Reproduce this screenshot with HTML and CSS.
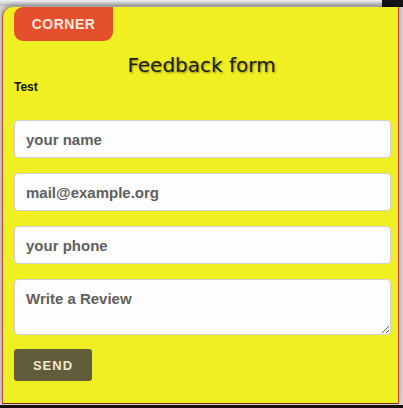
FILE: index.html
```html
<!DOCTYPE html>
<html>
<head>
<meta charset="utf-8">
<link rel="stylesheet" href="styles.css">
</head>
<body>
<div class="panel">
  <div class="tab">CORNER</div>
  <h1 class="title">Feedback form</h1>
  <div class="note">Test</div>
  <form class="form">
    <input class="field" type="text" placeholder="your name">
    <input class="field" type="text" placeholder="mail@example.org">
    <input class="field" type="text" placeholder="your phone">
    <textarea class="field area" placeholder="Write a Review"></textarea>
    <button class="send" type="button">SEND</button>
  </form>
</div>
</body>
</html>
```
FILE: styles.css
```css
html, body {
  margin: 0;
  padding: 0;
}
body {
  width: 403px;
  height: 408px;
  overflow: hidden;
  background: linear-gradient(to bottom, #f2f2f2 0, #bdbdbd 6px, #d8d8d8 6px) ;
  position: relative;
}
body::before {
  content: "";
  position: absolute;
  right: 0;
  top: 0;
  width: 21px;
  height: 7px;
  background: #151515;
}
body::after {
  content: "";
  position: absolute;
  left: 0;
  bottom: 0;
  width: 403px;
  height: 3px;
  background: #1a1010;
}
.panel {
  position: relative;
  z-index: 1;
  margin: 7px 0 0 2px;
  width: 397px;
  height: 397px;
  background: #f0ef22;
  border-left: 1px solid #c2452c;
  border-right: 1px solid #c2452c;
  border-bottom: 1px solid #7a2a18;
  border-top-left-radius: 10px;
  padding: 0 9px 0 11px;
  box-sizing: border-box;
  box-shadow: 0 -2px 5px rgba(0,0,0,0.35);
  font-family: "Liberation Sans", Arial, sans-serif;
}
.tab {
  width: 99px;
  height: 34px;
  background: #e4502e;
  color: #fbe6dc;
  font-weight: bold;
  font-size: 14px;
  letter-spacing: 0.5px;
  display: flex;
  align-items: center;
  justify-content: center;
  border-radius: 9px 0 9px 9px;
}
.title {
  margin: 11px 0 0;
  text-align: center;
  font-family: "DejaVu Sans", sans-serif;
  font-weight: normal;
  font-size: 20px;
  line-height: 26px;
  color: #1d1d10;
  text-shadow: 1px 1px 2px rgba(60,60,0,0.55);
}
.note {
  margin-top: 2px;
  font-size: 12px;
  font-weight: bold;
  line-height: 14px;
  color: #111;
}
.form {
  margin: 26px 0 0;
  display: flex;
  flex-direction: column;
  gap: 15px;
}
.field {
  display: block;
  width: 377px;
  height: 38px;
  box-sizing: border-box;
  border: 1px solid #cfcfcf;
  border-radius: 4px;
  background: #fdfdfd;
  padding: 0 11px;
  font-family: "Liberation Sans", Arial, sans-serif;
  font-size: 15px;
  font-weight: bold;
  color: #555;
  margin: 0;
  outline: none;
}
.field::placeholder {
  color: #606060;
  opacity: 1;
}
.area {
  height: 56px;
  padding-top: 10px;
  resize: vertical;
}
.send {
  width: 78px;
  height: 32px;
  margin-top: -1px;
  border: none;
  border-radius: 3px;
  background: #615c3b;
  color: #ecebd2;
  font-family: "Liberation Sans", Arial, sans-serif;
  font-weight: bold;
  font-size: 13px;
  letter-spacing: 1px;
  padding: 0;
}
```
